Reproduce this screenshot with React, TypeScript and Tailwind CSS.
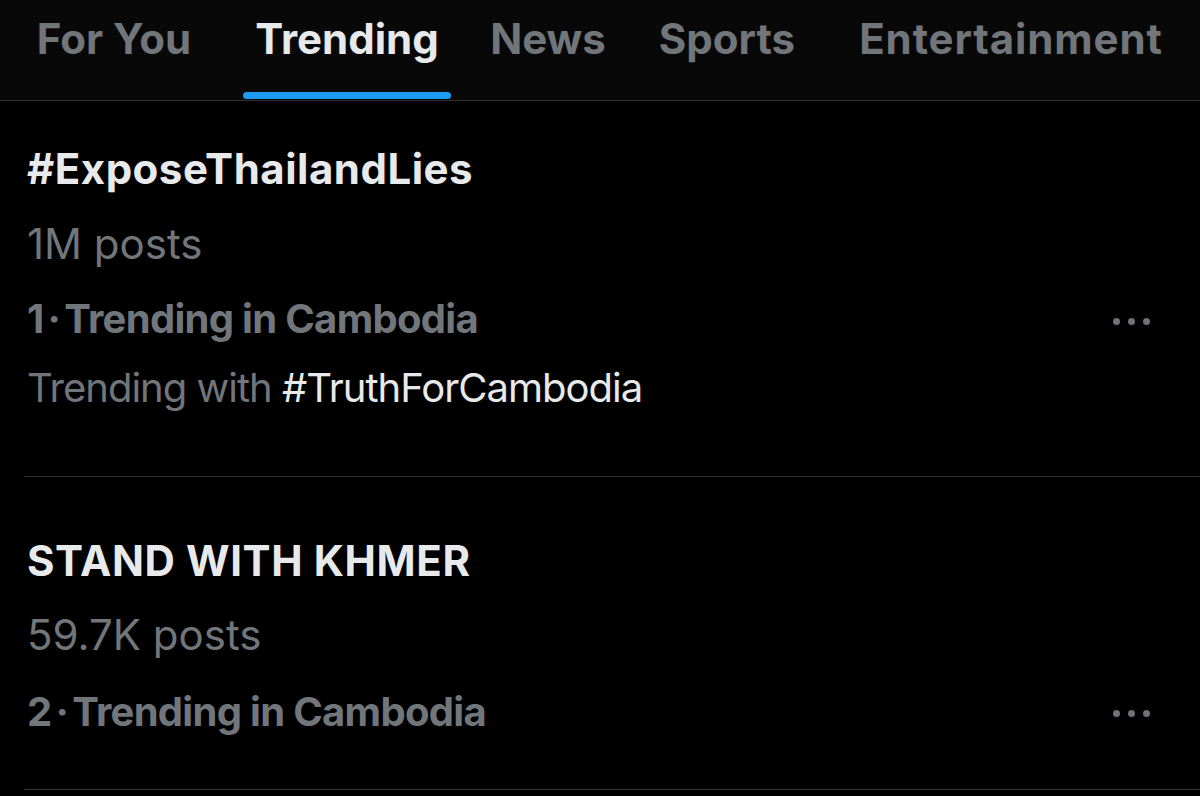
import React from "react";

const font = { fontFamily: "Inter, 'Noto Sans', sans-serif" };

function Dots() {
  return (
    <div className="flex items-center gap-[8px]">
      <span className="block h-[7px] w-[7px] rounded-full bg-[#6e7377]" />
      <span className="block h-[7px] w-[7px] rounded-full bg-[#6e7377]" />
      <span className="block h-[7px] w-[7px] rounded-full bg-[#6e7377]" />
    </div>
  );
}

function Rank({ n }: { n: string }) {
  return (
    <div className="text-[40px] font-bold tracking-[-0.7px] text-[#71767b]">
      {n}
      <span className="mx-[4px]">·</span>
      Trending in Cambodia
    </div>
  );
}

export default function App() {
  return (
    <div className="h-[796px] w-[1200px] overflow-hidden bg-black text-[#e7e9ea]" style={font}>
      <header className="h-[101px] overflow-hidden border-b border-[#2f3336] bg-[#080808]">
        <nav className="flex h-[100px] items-start text-[42px] font-bold text-[#71767b]">
          <div className="flex h-full w-[228px] shrink-0 items-start justify-center pt-[14px] leading-[50px]">For You</div>
          <div className="ml-[15px] flex h-full w-[208px] shrink-0 flex-col items-center justify-between pt-[14px] leading-[50px] text-[#e7e9ea]">
            <span>Trending</span>
            <span className="mb-[1px] block h-[7px] w-full rounded-full bg-[#1d9bf0]" />
          </div>
          <div className="flex h-full w-[194px] shrink-0 items-start justify-center pt-[14px] leading-[50px]">News</div>
          <div className="flex h-full w-[164px] shrink-0 items-start justify-center pt-[14px] leading-[50px]">Sports</div>
          <div className="flex h-full w-[404px] shrink-0 items-start justify-center pt-[14px] leading-[50px] tracking-[0.9px]">Entertainment</div>
        </nav>
      </header>

      <section className="ml-[24px] border-b border-[#2f3336] pl-[3px] pr-[50px] pt-[35px] pb-[55px]">
        <div className="flex items-start justify-between">
          <div className="flex flex-col leading-[66px]">
            <div className="text-[42px] font-bold tracking-[0.5px]">#ExposeThailandLies</div>
            <div className="mt-[9px] text-[42px] text-[#71767b]">1M posts</div>
            <div className="mt-[9px]">
              <Rank n="1" />
            </div>
            <div className="mt-[3px] text-[40px] tracking-[-1px] text-[#71767b]">
              Trending with <span className="text-[#e7e9ea]">#TruthForCambodia</span>
            </div>
          </div>
          <div className="mt-[182px]">
            <Dots />
          </div>
        </div>
      </section>

      <section className="ml-[24px] border-b border-[#2f3336] pl-[3px] pr-[50px] pt-[51px] pb-[44px]">
        <div className="flex items-start justify-between">
          <div className="flex flex-col leading-[66px]">
            <div className="text-[42px] font-bold tracking-[0.6px]">STAND WITH KHMER</div>
            <div className="mt-[8px] text-[42px] text-[#71767b]">59.7K posts</div>
            <div className="mt-[11px]">
              <Rank n="2" />
            </div>
          </div>
          <div className="mt-[182px]">
            <Dots />
          </div>
        </div>
      </section>
    </div>
  );
}
